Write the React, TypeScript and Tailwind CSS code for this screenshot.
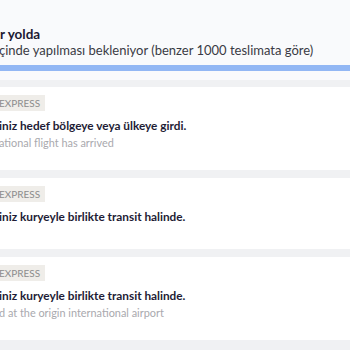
import React from "react";

const font = { fontFamily: "Lato, 'Noto Sans', sans-serif" };

function Card({ title, note, h }: { title: string; note?: string; h: string }) {
  return (
    <div className={`bg-white flex flex-col pt-[8px] ${h}`}>
      <div className="flex">
        <span className="h-[16px] pr-[5px] bg-[#efede9] text-[#8c8c8c] text-[10px] leading-[16px] -ml-[1px]">EXPRESS</span>
      </div>
      <div className="mt-[7px] text-[11.8px] leading-[16px] font-bold text-[#1e1c35] whitespace-nowrap -ml-[1px]">{title}</div>
      {note && <div className="mt-[2px] text-[10.9px] leading-[14px] text-[#a9a9ae] whitespace-nowrap -ml-[1px]">{note}</div>}
    </div>
  );
}

export default function App() {
  return (
    <div className="w-[350px] h-[350px] overflow-hidden bg-[#f0f1f3] flex flex-col" style={font}>
      <div className="h-[80px] bg-[#f9fafc] flex flex-col pt-[26px] shrink-0">
        <div className="text-[13.5px] leading-[16px] font-bold text-[#1c1a33] whitespace-nowrap">r yolda</div>
        <div className="text-[13px] leading-[16px] text-[#3a3a44] whitespace-nowrap -ml-[1px]">çinde yapılması bekleniyor (benzer 1000 teslimata göre)</div>
        <div className="mt-[7px] h-[6px] bg-[#92b7f4]"></div>
      </div>
      <div className="h-[7px] shrink-0"></div>
      <Card h="h-[83px] shrink-0" title="iniz hedef bölgeye veya ülkeye girdi." note="ational flight has arrived" />
      <div className="h-[8px] shrink-0"></div>
      <Card h="h-[71px] shrink-0" title="iniz kuryeyle birlikte transit halinde." />
      <div className="h-[8px] shrink-0"></div>
      <Card h="h-[83px] shrink-0" title="iniz kuryeyle birlikte transit halinde." note="d at the origin international airport" />
    </div>
  );
}
